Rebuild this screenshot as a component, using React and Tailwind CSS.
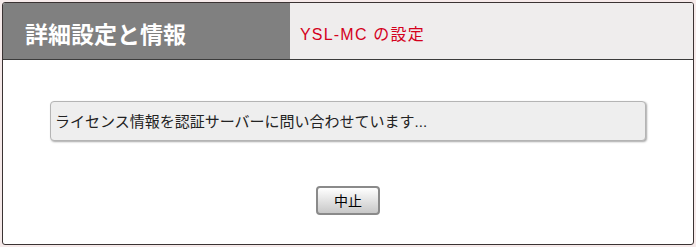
export default function App() {
  return (
    <div className="w-[696px] h-[247px] bg-[#f6eaea] p-[2px]" style={{ fontFamily: '"Liberation Sans", "Noto Sans CJK JP", sans-serif' }}>
      <div className="w-[692px] h-[243px] border border-[#3b3333] rounded-[3px] bg-white flex flex-col overflow-hidden">
        <div className="h-[57px] flex border-b border-[#3b3b3b] shrink-0">
          <div className="w-[287px] bg-[#808080] flex items-center pl-[22px] pt-[8px]">
            <span className="text-white font-bold text-[23px] leading-none">詳細設定と情報</span>
          </div>
          <div className="flex-1 bg-[#efeded] flex items-center pl-[10px] pt-[8px]">
            <span className="text-[#d4001c] text-[16px] leading-none tracking-[1.2px]">YSL-MC の設定</span>
          </div>
        </div>
        <div className="flex flex-col items-center pt-[41px]">
          <div className="w-[596px] h-[40px] bg-[#eeeeee] border border-[#b4b4b4] rounded-[4px] shadow-[1px_1px_2px_rgba(0,0,0,0.35)] flex items-center pl-[4px]">
            <span className="text-[15px] text-[#222] leading-none">ライセンス情報を認証サーバーに問い合わせています...</span>
          </div>
          <button className="mt-[45px] w-[64px] h-[29px] border-2 border-[#8a8a8a] rounded-[4px] bg-gradient-to-b from-white to-[#c8c8c8] text-[14px] text-black leading-none flex items-center justify-center">
            中止
          </button>
        </div>
      </div>
    </div>
  );
}
